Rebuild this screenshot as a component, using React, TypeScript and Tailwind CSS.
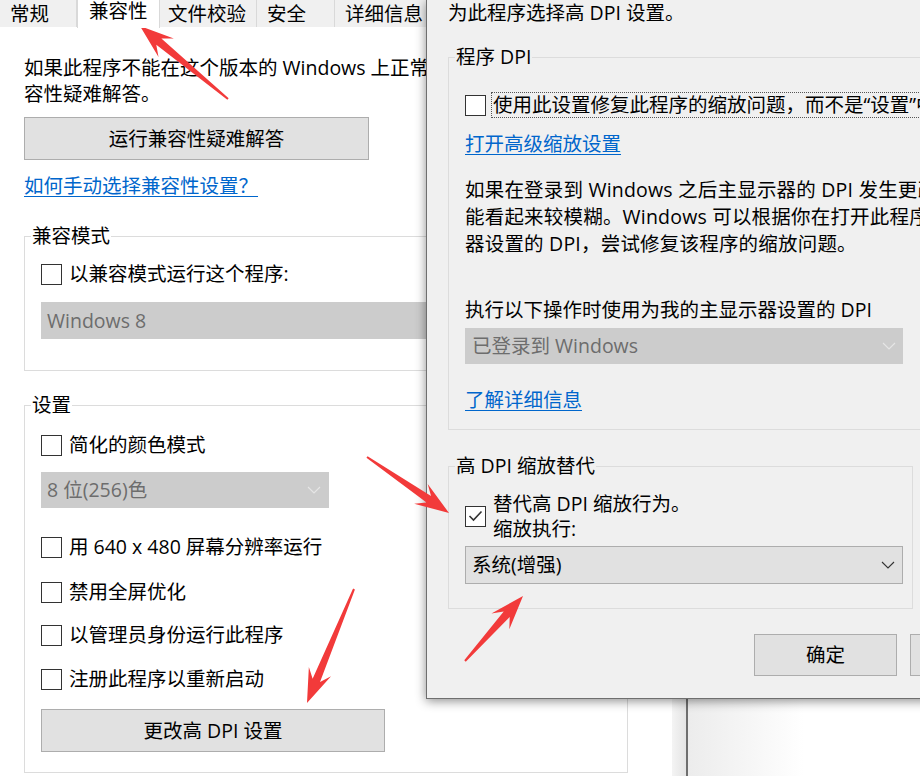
import React from 'react';

const Check: React.FC<{ checked?: boolean }> = ({ checked }) => (
  <span className="w-[21px] h-[21px] border-[1.5px] border-[#333] bg-white flex items-center justify-center shrink-0">
    {checked && (
      <svg width="15" height="12" viewBox="0 0 15 12">
        <polyline points="1.5,6 5.5,10 13.5,1.5" fill="none" stroke="#333" strokeWidth="1.6" />
      </svg>
    )}
  </span>
);

const Chevron: React.FC<{ color: string }> = ({ color }) => (
  <svg width="14" height="8" viewBox="0 0 14 8">
    <polyline points="1,1 7,7 13,1" fill="none" stroke={color} strokeWidth="1.1" />
  </svg>
);

const Row: React.FC<{ label: string; className?: string }> = ({ label, className }) => (
  <div className={`flex items-center gap-[7px] h-[26px] ${className ?? ''}`}>
    <Check />
    <span className="whitespace-nowrap">{label}</span>
  </div>
);

// red annotation arrow, tail -> tip
function arrowPoints(x1: number, y1: number, x2: number, y2: number) {
  const dx = x2 - x1;
  const dy = y2 - y1;
  const len = Math.hypot(dx, dy);
  const ux = dx / len;
  const uy = dy / len;
  const nx = -uy;
  const ny = ux;
  const head = 34;
  const p = (t: number, w: number) => `${x1 + ux * t + nx * w},${y1 + uy * t + ny * w}`;
  return [
    p(0, 1),
    p(len - head * 0.72, 4),
    p(len - head, 12),
    p(len, 0),
    p(len - head, -12),
    p(len - head * 0.72, -4),
    p(0, -1),
  ].join(' ');
}

const arrows: [number, number, number, number][] = [
  [228, 99, 140, 26],
  [367, 457, 449, 513],
  [465, 661, 523, 596],
  [354, 589, 307, 703],
];

const tabs = [
  { name: '常规', w: 'w-[77px]', pl: 'pl-[10px]' },
  { name: '兼容性', w: 'w-[83px]', pl: 'pl-[11px]', active: true },
  { name: '文件校验', w: 'w-[97px]', pl: 'pl-[8px]' },
  { name: '安全', w: 'w-[78px]', pl: 'pl-[10px]' },
  { name: '详细信息', w: 'w-[100px]', pl: 'pl-[10px]' },
];

export default function App() {
  return (
    <div className="relative w-[920px] h-[776px] overflow-hidden bg-white text-black text-[19.5px] leading-[26px] font-['Open_Sans','Noto_Sans_CJK_SC',sans-serif]">
      <div className="flex h-full">
        {/* properties window */}
        <div className="w-[672px] h-full bg-white shrink-0">
          <div className="flex h-[27px] border-b border-[#d9d9d9] bg-white">
            {tabs.map((t) =>
              t.active ? (
                <div
                  key={t.name}
                  className={`${t.w} ${t.pl} h-[28px] bg-white border-x border-[#d9d9d9] leading-[22px] relative z-10`}
                >
                  {t.name}
                </div>
              ) : (
                <div
                  key={t.name}
                  className={`${t.w} ${t.pl} h-[27px] bg-[#f0f0f0] border-r border-[#d9d9d9] leading-[27px]`}
                >
                  {t.name}
                </div>
              )
            )}
          </div>

          <div className="pl-[24px]">
            <p className="mt-[28px] whitespace-nowrap">
              如果此程序不能在这个版本的 Windows 上正常工作，请尝试运行兼
              <br />
              容性疑难解答。
            </p>
            <div className="mt-[10px] w-[345px] h-[43px] bg-[#e1e1e1] border border-[#adadad] flex items-center justify-center">
              运行兼容性疑难解答
            </div>
            <div className="mt-[13px] text-[#0066cc] underline underline-offset-[3px]">如何手动选择兼容性设置？</div>

            <fieldset className="mt-[24px] w-[604px] border border-[#dcdcdc] pl-[16px] pb-[31px]">
              <legend className="-ml-[10px] px-[1px] leading-[26px]">兼容模式</legend>
              <Row label="以兼容模式运行这个程序:" className="mt-[12px]" />
              <div className="mt-[15px] w-[560px] h-[37px] bg-[#cccccc] text-[#6d6d6d] pl-[6px] flex items-center">
                Windows 8
              </div>
            </fieldset>

            <fieldset className="mt-[21px] w-[604px] border border-[#dcdcdc] pl-[16px] pb-[20px]">
              <legend className="-ml-[10px] px-[1px] leading-[26px]">设置</legend>
              <Row label="简化的颜色模式" className="mt-[14px]" />
              <div className="mt-[14px] w-[288px] h-[36px] bg-[#cccccc] text-[#6d6d6d] pl-[6px] pr-[8px] flex items-center justify-between">
                <span>8 位(256)色</span>
                <Chevron color="#e6e6e6" />
              </div>
              <Row label="用 640 x 480 屏幕分辨率运行" className="mt-[26px]" />
              <Row label="禁用全屏优化" className="mt-[19px]" />
              <Row label="以管理员身份运行此程序" className="mt-[17px]" />
              <Row label="注册此程序以重新启动" className="mt-[18px]" />
              <div className="mt-[17px] w-[344px] h-[43px] bg-[#e1e1e1] border border-[#adadad] flex items-center justify-center">
                更改高 DPI 设置
              </div>
            </fieldset>
          </div>
        </div>

        <div className="w-[14px] h-full bg-gradient-to-r from-[#f4f4f4] to-[#e4e4e4] shrink-0" />
        <div className="w-[2px] h-full bg-[#6e6e6e] shrink-0" />
        <div className="flex-1 h-full bg-gradient-to-r from-[#ececec] via-white to-white" />
      </div>

      {/* high DPI dialog */}
      <div className="absolute left-[426px] top-0 w-[520px] h-[699px] bg-[#f0f0f0] border-l border-b border-[#6f6f6f] shadow-[0_2px_10px_rgba(0,0,0,0.45)] pl-[21px]">
        <div className="whitespace-nowrap">为此程序选择高 DPI 设置。</div>

        <fieldset className="mt-[18px] w-[467px] border border-[#dcdcdc] pl-[16px] pb-[16px]">
          <legend className="-ml-[10px] px-[1px] leading-[26px]">程序 DPI</legend>
          <div className="mt-[22px] flex items-center gap-[5px] h-[26px]">
            <Check />
            <span className="whitespace-nowrap border border-dotted border-[#555] px-[1px] leading-[24px]">
              使用此设置修复此程序的缩放问题，而不是“设置”中的缩放问题
            </span>
          </div>
          <div className="mt-[13px] text-[#0066cc] underline underline-offset-[3px]">打开高级缩放设置</div>
          <p className="mt-[19px] leading-[27px] whitespace-nowrap tracking-[0.2px]">
            如果在登录到 Windows 之后主显示器的 DPI 发生更改，此程序可
            <br />
            能看起来较模糊。Windows 可以根据你在打开此程序时为主显示
            <br />
            器设置的 DPI，尝试修复该程序的缩放问题。
          </p>
          <div className="mt-[40px] whitespace-nowrap">执行以下操作时使用为我的主显示器设置的 DPI</div>
          <div className="mt-[5px] w-[438px] h-[36px] bg-[#cccccc] text-[#6d6d6d] pl-[7px] pr-[7px] flex items-center justify-between">
            <span>已登录到 Windows</span>
            <Chevron color="#e6e6e6" />
          </div>
          <div className="mt-[23px] text-[#0066cc] underline underline-offset-[3px]">了解详细信息</div>
        </fieldset>

        <fieldset className="mt-[23px] w-[465px] border border-[#dcdcdc] pl-[16px] pb-[24px]">
          <legend className="-ml-[10px] px-[1px] leading-[26px]">高 DPI 缩放替代</legend>
          <div className="mt-[12px] flex items-center gap-[7px]">
            <Check checked />
            <div className="leading-[25px] whitespace-nowrap">
              替代高 DPI 缩放行为。
              <br />
              缩放执行:
            </div>
          </div>
          <div className="mt-[5px] w-[438px] h-[38px] bg-[#e1e1e1] border border-[#adadad] pl-[6px] pr-[7px] flex items-center justify-between">
            <span>系统(增强)</span>
            <Chevron color="#333" />
          </div>
        </fieldset>

        <div className="mt-[25px] flex gap-[13px] pl-[306px]">
          <div className="w-[143px] h-[42px] bg-[#e1e1e1] border border-[#adadad] flex items-center justify-center shrink-0">
            确定
          </div>
          <div className="w-[143px] h-[42px] bg-[#e1e1e1] border border-[#adadad] flex items-center justify-center shrink-0">
            取消
          </div>
        </div>
      </div>

      <svg className="absolute inset-0 pointer-events-none" width="920" height="776" viewBox="0 0 920 776">
        {arrows.map((a, i) => (
          <polygon key={i} points={arrowPoints(a[0], a[1], a[2], a[3])} fill="#f23a3a" />
        ))}
      </svg>
    </div>
  );
}
